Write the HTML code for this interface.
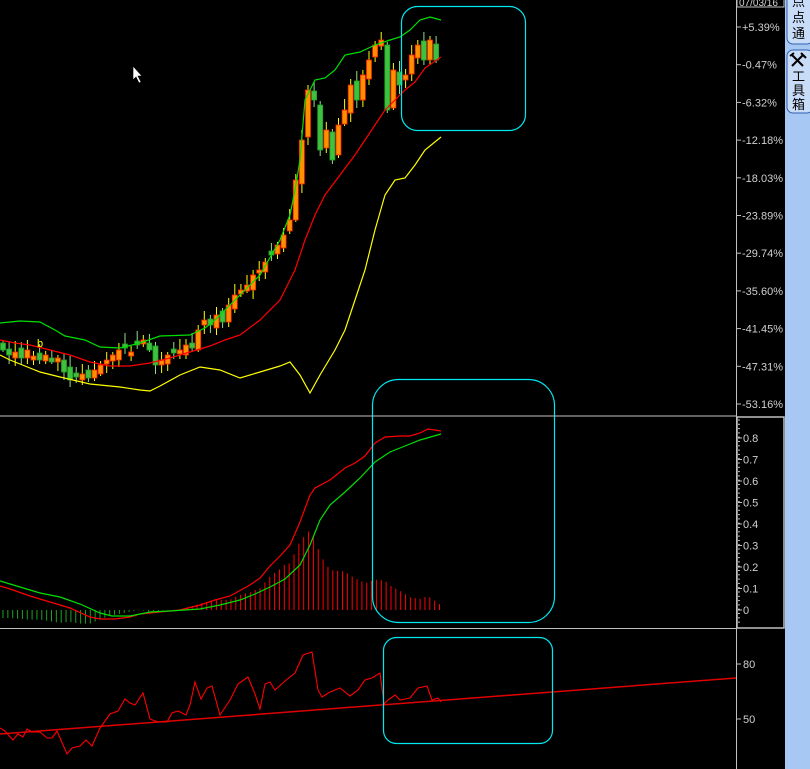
<!DOCTYPE html>
<html><head><meta charset="utf-8"><style>
html,body{margin:0;padding:0;background:#000;width:810px;height:769px;overflow:hidden}
svg{display:block}
text{font-family:"Liberation Sans","Noto Sans CJK SC",sans-serif}
</style></head><body>
<svg id="s" width="810" height="769" xmlns="http://www.w3.org/2000/svg">
<rect width="810" height="769" fill="#000"/>
<g id="cand"></g>
<polyline fill="none" stroke="#00e000" stroke-width="1.2" points="0,323 10,322 20,321 40,322 55,330 65,336 85,340 100,347 120,348 140,343 160,336 190,335 205,328 215,320 240,295 260,275 280,240 290,215 295,190 300,160 305,100 315,80 325,78 335,70 345,55 360,52 375,45 390,40 400,37 410,30 420,20 430,17 441,20"/>
<polyline fill="none" stroke="#ff0000" stroke-width="1.2" points="0,340 15,343 30,345 50,350 70,355 90,362 110,366 130,366 150,363 170,358 190,352 210,346 225,340 240,335 260,320 280,300 295,270 305,240 315,215 325,195 340,175 355,155 365,140 375,125 385,110 395,100 405,90 415,82 425,68 441,57"/>
<polyline fill="none" stroke="#ffff00" stroke-width="1.2" points="0,355 10,360 25,366 40,372 60,377 90,384 120,387 140,390 150,391 160,386 180,375 200,367 220,370 240,378 260,372 280,366 290,362 300,375 310,393 320,375 335,350 345,330 355,300 365,270 375,230 385,195 395,180 405,178 415,165 425,150 441,137"/>
<text x="37" y="347" fill="#ffff00" font-size="11">b</text>
<g id="hist"></g>
<polyline id="dif" fill="none" stroke="#ff0000" stroke-width="1.2"/>
<polyline id="dea" fill="none" stroke="#00e000" stroke-width="1.2"/>
<line x1="0" y1="734" x2="736" y2="678" stroke="#e00000" stroke-width="1.5"/>
<polyline fill="none" stroke="#ff0000" stroke-width="1.1" points="0,728 5,731 13,740 18,734 23,737 27,729 32,732 40,732 47,738 52,738 57,731 67,754 72,748 80,746 86,740 92,746 100,728 110,714 118,711 125,699 130,703 135,705 143,693 150,719 158,722 167,722 172,713 178,711 186,715 190,705 195,682 201,699 207,688 212,686 220,715 230,700 238,684 248,677 255,694 260,709 265,684 270,682 275,690 285,681 295,673 303,655 312,652 318,690 322,697 330,692 340,688 350,696 358,690 365,680 372,678 380,673 382,688 384,704 388,700 395,695 400,700 410,698 418,688 427,686 432,700 438,698 441,702"/>
<rect x="401.5" y="6.5" width="124" height="124" rx="16" fill="none" stroke="#00e8f0" stroke-width="1.2"/>
<rect x="372.5" y="379.5" width="182" height="243" rx="26" fill="none" stroke="#00e8f0" stroke-width="1.2"/>
<rect x="383.5" y="637.5" width="169" height="106" rx="13" fill="none" stroke="#00e8f0" stroke-width="1.2"/>
<line x1="0" y1="416" x2="736" y2="416" stroke="#c0c0c0"/>
<line x1="0" y1="628.5" x2="736" y2="628.5" stroke="#c0c0c0"/>
<line x1="736.5" y1="0" x2="736.5" y2="769" stroke="#c0c0c0"/>
<rect x="737" y="417" width="47" height="211" fill="none" stroke="#c0c0c0" stroke-width="1.5"/>
<rect x="737" y="-2" width="47" height="9" fill="none" stroke="#c0c0c0"/>
<text x="739" y="6" fill="#d0d0d0" font-size="10">07/03/16</text>
<g id="ax" fill="#d0d0d0" font-size="11"></g>
<path d="M133,66 v14 l3,-3 l3,6 l2,-1 l-3,-6 h4 z" fill="#fff" stroke="#000" stroke-width="0.6"/>
<rect x="785" y="0" width="25" height="769" fill="#a8c8f4"/>
<rect x="787" y="-8" width="26" height="52" rx="6" fill="#c8dcf8" stroke="#3060b0"/>
<text x="792" y="6" fill="#000" font-size="13">点</text>
<text x="792" y="22" fill="#000" font-size="13">点</text>
<text x="792" y="38" fill="#000" font-size="13">通</text>
<rect x="787" y="50" width="26" height="63" rx="6" fill="#c8dcf8" stroke="#3060b0"/>
<path d="M792,55 l11,11 M803,55 l-11,11 M790,56 l4,-3 M801,53 l5,5" stroke="#000" stroke-width="2" fill="none"/>
<text x="792" y="81" fill="#000" font-size="13">工</text>
<text x="792" y="95" fill="#000" font-size="13">具</text>
<text x="792" y="109" fill="#000" font-size="13">箱</text>
</svg>
<script>
(function(){
var NS="http://www.w3.org/2000/svg";
function el(t,a,p){var e=document.createElementNS(NS,t);for(var k in a)e.setAttribute(k,a[k]);p.appendChild(e);return e;}
var C=[350,355,352,358,350,356,360,355,362,358,372,380,377,374,378,370,365,360,355,350,348,352,345,340,350,365,360,355,353,350,345,348,330,320,325,315,322,305,295,290,285,275,270,262,255,245,235,220,180,140,90,100,150,130,160,125,110,85,100,75,60,45,40,110,70,85,75,55,45,60,40,60];
var g=document.getElementById('cand');
var prev=348;
for(var i=0;i<C.length;i++){
 var x=3+i*6.1,c=C[i];
 var off=((i*37)%11)-5;
 var o=prev+off; if(Math.abs(o-c)<3)o=c+((i%2)?4:-4);
 var r1=3+((i*13)%9), r2=2+((i*7)%8);
 var tp=Math.min(o,c),bt=Math.max(o,c);
 var up=c<o;
 el('line',{x1:x,y1:tp-r1,x2:x,y2:bt+r2,stroke:up?'#ffff00':'#90e090','stroke-width':1},g);
 el('rect',{x:x-2.5,y:tp,width:5,height:Math.max(1,bt-tp),fill:up?'#ff9000':'#40c040',stroke:up?'#ff2000':'#20a020','stroke-width':0.8},g);
 prev=c;
}
function interp(p,x){for(var i=0;i<p.length-1;i++){if(x>=p[i][0]&&x<=p[i+1][0]){var t=(x-p[i][0])/(p[i+1][0]-p[i][0]);return p[i][1]+t*(p[i+1][1]-p[i][1]);}}return p[p.length-1][1];}
var DIF=[[0,586],[10,589],[30,596],[50,602],[70,608],[90,617],[100,619],[115,619],[130,617],[140,614],[160,612],[180,610],[200,605],[215,600],[230,596],[250,585],[260,578],[270,566],[280,556],[290,545],[300,522],[310,495],[315,488],[330,480],[345,468],[355,463],[365,456],[375,443],[385,437],[400,436],[410,436],[420,433],[428,429],[441,431]];
var DEA=[[0,581],[20,587],[40,593],[60,597],[80,604],[100,613],[112,616],[130,616],[150,612],[170,611],[185,610],[200,609],[220,605],[240,600],[255,594],[270,587],[285,579],[300,565],[310,545],[320,520],[330,505],[345,492],[360,478],[375,462],[390,452],[405,446],[420,440],[441,434]];
document.getElementById('dif').setAttribute('points',DIF.map(function(p){return p.join(',')}).join(' '));
document.getElementById('dea').setAttribute('points',DEA.map(function(p){return p.join(',')}).join(' '));
var h=document.getElementById('hist');
for(var xx=3;xx<=442;xx+=4.85){
 var d=(interp(DEA,xx)-interp(DIF,xx))*1.6;
 el('line',{x1:xx,y1:610,x2:xx,y2:610-d,stroke:d>=0?'#ff0000':'#20a020','stroke-width':1},h);
}
var ax=document.getElementById('ax');
var L=['+5.39%','-0.47%','-6.32%','-12.18%','-18.03%','-23.89%','-29.74%','-35.60%','-41.45%','-47.31%','-53.16%'];
for(var i=0;i<L.length;i++){var y=27+i*37.7;el('line',{x1:737,y1:y,x2:741,y2:y,stroke:'#c0c0c0'},ax);var t=el('text',{x:742,y:y+4},ax);t.textContent=L[i];}
for(var i=0;i<=8;i++){var y=610-i*21.5;el('line',{x1:738,y1:y,x2:742,y2:y,stroke:'#c0c0c0'},ax);var t=el('text',{x:743,y:y+4},ax);t.textContent=i==0?'0':'0.'+i;}
for(var y=420;y<626;y+=4.3)el('line',{x1:738,y1:y,x2:740,y2:y,stroke:'#c0c0c0'},ax);
[[664,'80'],[719,'50']].forEach(function(a){el('line',{x1:737,y1:a[0],x2:741,y2:a[0],stroke:'#c0c0c0'},ax);var t=el('text',{x:743,y:a[0]+4},ax);t.textContent=a[1];});
})();
</script>
</body></html>
